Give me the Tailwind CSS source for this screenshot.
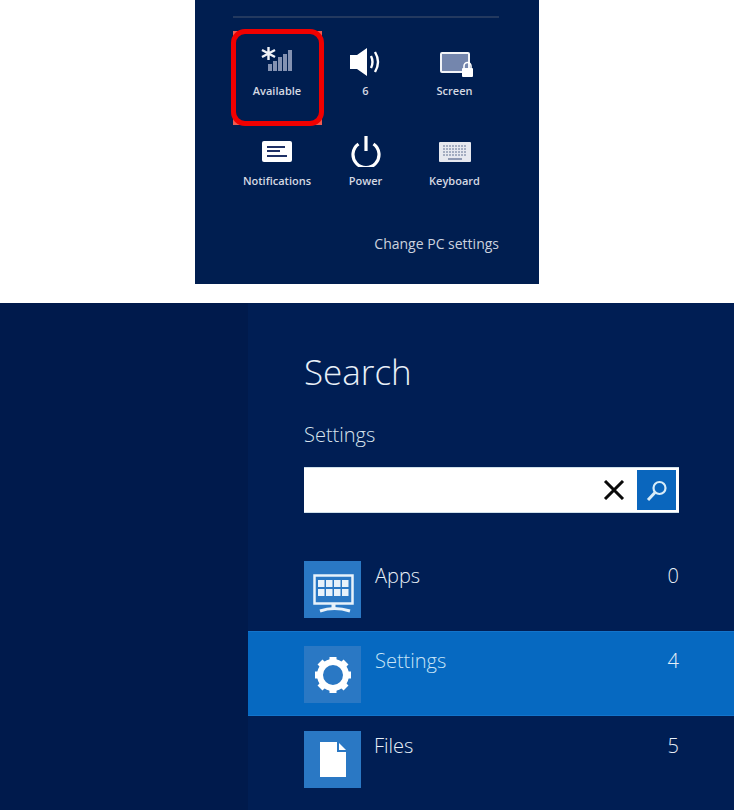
<!DOCTYPE html>
<html lang="en">
<head>
  <meta charset="UTF-8">
  <script src="https://cdn.jsdelivr.net/npm/@tailwindcss/browser@4"></script>
  <title>Charms</title>
</head>
<body class="bg-white font-['Open_Sans',sans-serif] w-[734px] h-[810px] overflow-hidden">

  <!-- settings charm -->
  <div class="relative ml-[195px] w-[344px] h-[284px] bg-[#001e50] pt-4 pl-[38px]">
    <div class="w-[266px] h-[2px] bg-[#23395f]"></div>

    <!-- red highlight, sits under the grid -->
    <div class="absolute left-[38px] top-[31px] w-[89px] h-[94px] bg-[#ee5b50]">
      <div class="absolute -left-[2px] -top-[2px] w-[93px] h-[97px] rounded-[14px] border-[5px] border-[#f00000] bg-[#001e50]"></div>
    </div>

    <div class="relative grid grid-cols-[88px_89px_89px] grid-rows-[90px_90px] mt-[25px] text-[11px] font-semibold text-[#d5d9e2] text-center">
      <div class="flex flex-col items-center">
        <svg class="h-[34px] w-[36px]" viewBox="0 0 36 34">
          <path d="M9.500 4v13M3 7l13 7M16 7L3 14" stroke="#f0f2f7" stroke-width="2.400"/>
          <g fill="#8492b2"><rect x="9" y="21" width="4" height="7"/><rect x="14" y="18" width="4" height="10"/><rect x="19" y="14" width="4" height="14"/><rect x="24" y="11" width="4" height="17"/><rect x="29" y="7" width="4" height="21"/></g>
        </svg>
        <span class="mt-[7px] leading-[14px]">Available</span>
      </div>
      <div class="flex flex-col items-center">
        <svg class="h-[34px] w-[36px]" viewBox="0 0 36 34">
          <path d="M2 12h7l10-7v28l-10-7H2z" fill="#fff"/>
          <path d="M23 13q3 6 0 12M27 9q6 10 0 20" fill="none" stroke="#fff" stroke-width="2.400"/>
        </svg>
        <span class="mt-[7px] leading-[14px]">6</span>
      </div>
      <div class="flex flex-col items-center">
        <svg class="h-[34px] w-[36px]" viewBox="0 0 36 34">
          <rect x="4" y="10" width="28" height="19" rx="1" fill="#7486ad" stroke="#f2f4f8" stroke-width="2"/>
          <path d="M27 26v-3a3.500 3.500 0 0 1 7 0v3" fill="none" stroke="#fff" stroke-width="1.600"/>
          <rect x="25" y="25" width="11" height="9" rx="1" fill="#fff"/>
        </svg>
        <span class="mt-[7px] leading-[14px]">Screen</span>
      </div>

      <div class="flex flex-col items-center">
        <svg class="h-[34px] w-[36px]" viewBox="0 0 36 34">
          <rect x="3" y="8" width="30" height="21" rx="2" fill="#fff"/>
          <path d="M8 14h18M8 18h13M8 23h20" stroke="#1f3166" stroke-width="1.800"/>
        </svg>
        <span class="mt-[7px] leading-[14px]">Notifications</span>
      </div>
      <div class="flex flex-col items-center">
        <svg class="h-[34px] w-[36px]" viewBox="0 0 36 34">
          <path d="M10.500 11a13 13 0 1 0 15 0" fill="none" stroke="#fff" stroke-width="3.200"/>
          <path d="M18 3v15" stroke="#fff" stroke-width="3.200"/>
        </svg>
        <span class="mt-[7px] leading-[14px]">Power</span>
      </div>
      <div class="flex flex-col items-center">
        <svg class="h-[34px] w-[36px]" viewBox="0 0 36 34">
          <rect x="2" y="9" width="32" height="20" rx="1" fill="#e6e8ef"/>
          <path d="M6 13h24M6 16h24M6 19h24M6 22h24" stroke="#8f99b3" stroke-width="1.500" stroke-dasharray="2 1"/>
          <path d="M11 26h14" stroke="#8f99b3" stroke-width="2"/>
        </svg>
        <span class="mt-[7px] leading-[14px]">Keyboard</span>
      </div>
    </div>

    <p class="w-[266px] mt-[11px] text-right text-[14px] leading-[20px] text-[#ccd2de]">Change PC settings</p>
  </div>

  <!-- search charm -->
  <div class="mt-[19px] h-[507px] flex bg-[#001a4c]">
    <div class="w-[248px] shrink-0"></div>
    <div class="flex-1 bg-[#001e54] pt-[42px]">
      <h1 class="pl-[56px] text-[35px] leading-[54px] font-light text-[#e8f0f8]">Search</h1>
      <p class="pl-[56px] mt-[23px] text-[20px] leading-[26px] font-light text-[#d8e4ee]">Settings</p>

      <div class="ml-[56px] mt-[19px] w-[375px] h-[46px] bg-white border-y border-[#cfe0ea] flex items-center justify-end pr-[3px]">
        <svg class="h-[20px] w-[22px] mr-[12px]" viewBox="0 0 22 20">
          <path d="M2 1l18 18M20 1L2 19" stroke="#0a0a0a" stroke-width="3"/>
        </svg>
        <div class="w-[39px] h-[40px] bg-[#0a66bd] flex items-center justify-center">
          <svg class="h-[26px] w-[26px]" viewBox="0 0 26 26">
            <circle cx="15.500" cy="11" r="6" fill="none" stroke="#d8ecf8" stroke-width="2.200"/>
            <path d="M11 15.500L4 23" stroke="#d8ecf8" stroke-width="3"/>
          </svg>
        </div>
      </div>

      <div class="mt-[33px]">
        <div class="h-[85px] flex pl-[56px] pr-[55px] pt-[15px] text-[20px] font-light text-[#e8f0f8]">
          <div class="w-[57px] h-[57px] bg-[#2a78c4]">
            <svg class="h-[57px] w-[57px]" viewBox="0 0 57 57">
              <rect x="10.500" y="14.500" width="38" height="28" fill="none" stroke="#e8f2fa" stroke-width="2.500"/>
              <g fill="#e8f2fa">
                <rect x="14" y="19" width="6.500" height="7"/><rect x="22" y="19" width="6.500" height="7"/><rect x="30" y="19" width="6.500" height="7"/><rect x="38" y="19" width="6.500" height="7"/>
                <rect x="14" y="28" width="6.500" height="7"/><rect x="22" y="28" width="6.500" height="7"/><rect x="30" y="28" width="6.500" height="7"/><rect x="38" y="28" width="6.500" height="7"/>
                <rect x="27.500" y="43" width="4" height="5"/>
              </g>
              <path d="M16 50q14-5 30 0" fill="none" stroke="#e8f2fa" stroke-width="3"/>
            </svg>
          </div>
          <span class="ml-[14px] leading-[26px] mt-[2px]">Apps</span>
          <span class="ml-auto leading-[26px] mt-[2px]">0</span>
        </div>

        <div class="h-[85px] flex pl-[56px] pr-[55px] pt-[14px] bg-[#0669c1] border-y border-[#1274cb] text-[20px] font-light text-[#c8e4f6]">
          <div class="w-[57px] h-[57px] bg-[#2a78c4] flex items-center justify-center">
            <svg class="h-[38px] w-[38px]" viewBox="0 0 38 38">
              <circle cx="19" cy="19" r="13" fill="none" stroke="#fff" stroke-width="6"/>
              <path d="M19 1v6M19 31v6M1 19h6M31 19h6M6 6l4 4M28 28l4 4M32 6l-4 4M10 28l-4 4" stroke="#fff" stroke-width="7"/>
            </svg>
          </div>
          <span class="ml-[14px] leading-[26px] mt-[2px]">Settings</span>
          <span class="ml-auto leading-[26px] mt-[2px] text-[#e8f0f8]">4</span>
        </div>

        <div class="h-[85px] flex pl-[56px] pr-[55px] pt-[15px] text-[20px] font-light text-[#e8f0f8]">
          <div class="w-[57px] h-[57px] bg-[#2a78c4]">
            <svg class="h-[57px] w-[57px]" viewBox="0 0 57 57">
              <path d="M16 11h17v10h9v25H16z" fill="#fff"/>
              <path d="M35 12l7 7h-7z" fill="#fff"/>
            </svg>
          </div>
          <span class="ml-[13px] leading-[26px] mt-[2px]">Files</span>
          <span class="ml-auto leading-[26px] mt-[2px]">5</span>
        </div>
      </div>
    </div>
  </div>
</body>
</html>
